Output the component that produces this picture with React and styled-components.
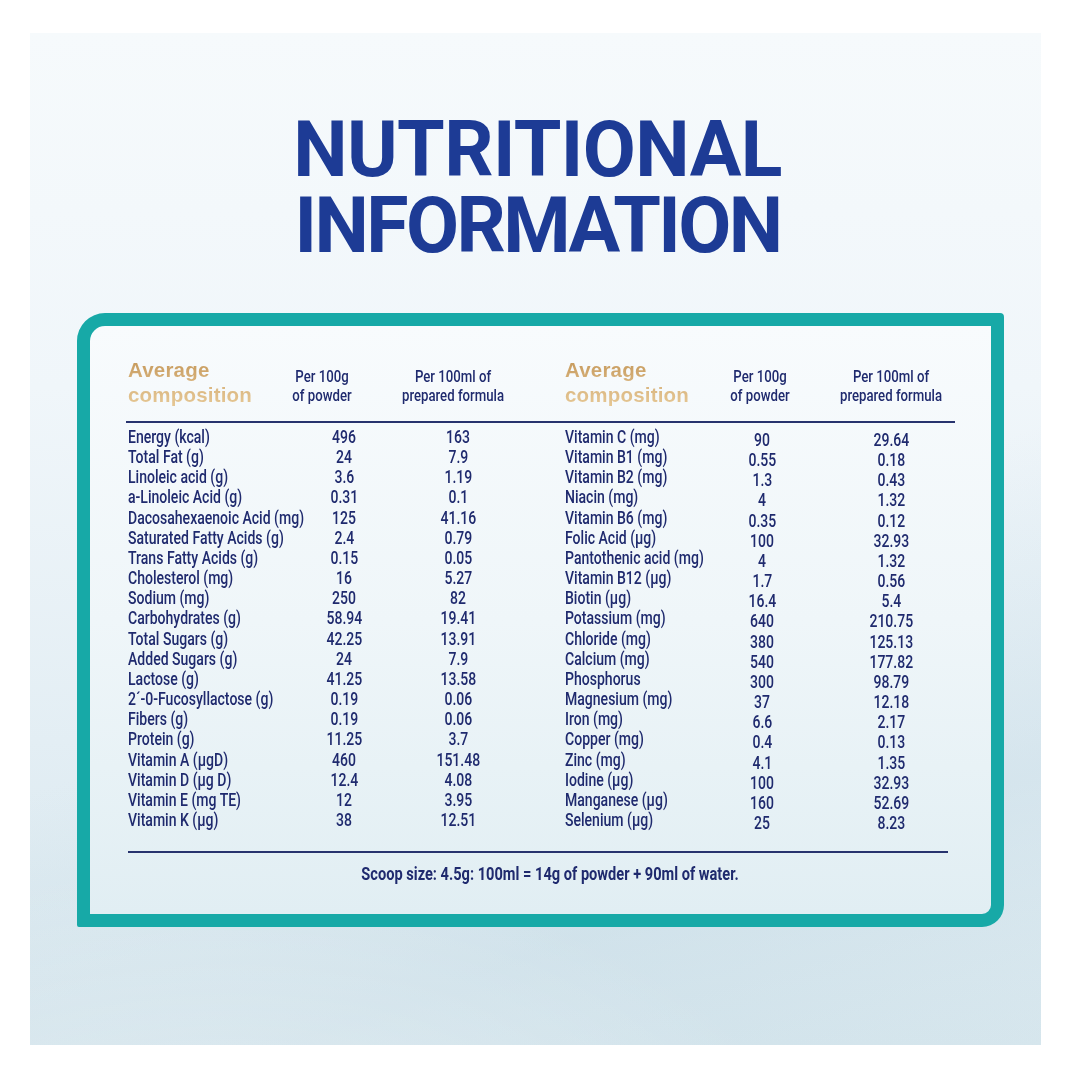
import React from "react";
import styled, { createGlobalStyle } from "styled-components";

const GlobalStyle = createGlobalStyle`
  html, body {
    margin: 0;
    padding: 0;
    background: #ffffff;
  }
  body {
    font-family: Roboto, "Liberation Sans", sans-serif;
  }
`;

const NAVY = "#1f2a6e";
const TEAL = "#17a9a7";

const Page = styled.div`
  width: 1080px;
  height: 1080px;
  padding-top: 33px;
  box-sizing: border-box;
`;

const Panel = styled.div`
  width: 1011px;
  height: 1012px;
  margin-left: 30px;
  box-sizing: border-box;
  padding-top: 79px;
  display: flex;
  flex-direction: column;
  background:
    radial-gradient(ellipse 900px 520px at 18% 118%, rgba(255, 255, 255, 0.45), rgba(255, 255, 255, 0) 70%),
    linear-gradient(160deg, rgba(255, 255, 255, 0) 55%, rgba(190, 214, 226, 0.35) 80%, rgba(255, 255, 255, 0) 100%),
    linear-gradient(180deg, #f6fafc 0%, #f0f6fa 35%, #e3eef4 70%, #d6e6ed 100%);
`;

const Title = styled.h1`
  margin: 0;
  font-family: Roboto, "Liberation Sans", sans-serif;
  font-weight: 700;
  font-size: 77px;
  line-height: 76px;
  color: #1d3b95;
  text-align: center;
  padding-left: 4px;
`;

const TitleLine = styled.span`
  display: block;
  letter-spacing: ${(p) => p.$spacing || "0px"};
`;

// the artwork uses a condensed DIN face; squeeze a regular face to match its widths
const Squeeze = styled.span`
  display: ${(p) => (p.$block ? "block" : "inline-block")};
  white-space: nowrap;
  transform: scaleX(${(p) => p.$k || 0.8});
  transform-origin: ${(p) => p.$origin || "left"} center;
`;

const Frame = styled.div`
  margin: 49px 0 0 47px;
  width: 927px;
  box-sizing: border-box;
  border: 13px solid ${TEAL};
  border-radius: 28px 4px 22px 2px;
  padding: 31px 0 0 38px;
  height: 614px;
  background: linear-gradient(180deg, #f8fbfd 0%, #eff6f9 50%, #e1eef3 100%);
  color: ${NAVY};
`;

const HeaderRow = styled.div`
  display: grid;
  grid-template-columns: 150px 88px 174px 25px 150px 90px 172px;
  align-items: center;
`;

const CompositionTitle = styled.div`
  font-family: "Liberation Sans", Arial, sans-serif;
  font-weight: 700;
  font-size: 20.5px;
  line-height: 25px;
  letter-spacing: 0.2px;
  background: linear-gradient(180deg, #c39556 0%, #d9b57f 55%, #e6c895 100%);
  -webkit-background-clip: text;
  background-clip: text;
  color: transparent;
  grid-column: ${(p) => p.$col};
`;

const ColHead = styled.div`
  font-size: 16.5px;
  font-weight: 500;
  line-height: 19px;
  text-align: center;
  padding-top: 8px;
  grid-column: ${(p) => p.$col};
`;

const Rule = styled.div`
  height: ${(p) => p.$thick || 2}px;
  width: ${(p) => p.$width}px;
  margin-left: ${(p) => p.$left || 0}px;
  margin-top: ${(p) => p.$top}px;
  background: #27336e;
`;

const Body = styled.div`
  display: flex;
  margin-top: 4px;
`;

const Half = styled.div`
  display: grid;
  grid-template-columns: ${(p) => p.$cols};
  margin-right: ${(p) => p.$gap || 0}px;
`;

const Label = styled.div`
  font-size: 18px;
  font-weight: 500;
  line-height: 20.15px;
  white-space: nowrap;
`;

const Value = styled.div`
  font-size: 17.5px;
  font-weight: 500;
  line-height: 20.15px;
  text-align: center;
  position: relative;
  top: ${(p) => (p.$shift ? 3 : 0)}px;
`;

const Note = styled.div`
  font-weight: 700;
  font-size: 17.5px;
  text-align: center;
  width: 844px;
  margin-top: 11px;
`;

const leftRows = [
  ["Energy (kcal)", "496", "163"],
  ["Total Fat (g)", "24", "7.9"],
  ["Linoleic acid (g)", "3.6", "1.19"],
  ["a-Linoleic Acid (g)", "0.31", "0.1"],
  ["Dacosahexaenoic Acid (mg)", "125", "41.16"],
  ["Saturated Fatty Acids (g)", "2.4", "0.79"],
  ["Trans Fatty Acids (g)", "0.15", "0.05"],
  ["Cholesterol (mg)", "16", "5.27"],
  ["Sodium (mg)", "250", "82"],
  ["Carbohydrates (g)", "58.94", "19.41"],
  ["Total Sugars (g)", "42.25", "13.91"],
  ["Added Sugars (g)", "24", "7.9"],
  ["Lactose (g)", "41.25", "13.58"],
  ["2\u00b4-0-Fucosyllactose (g)", "0.19", "0.06"],
  ["Fibers (g)", "0.19", "0.06"],
  ["Protein (g)", "11.25", "3.7"],
  ["Vitamin A (\u00b5gD)", "460", "151.48"],
  ["Vitamin D (\u00b5g D)", "12.4", "4.08"],
  ["Vitamin E (mg TE)", "12", "3.95"],
  ["Vitamin K (\u00b5g)", "38", "12.51"],
];

const rightRows = [
  ["Vitamin C (mg)", "90", "29.64"],
  ["Vitamin B1 (mg)", "0.55", "0.18"],
  ["Vitamin B2 (mg)", "1.3", "0.43"],
  ["Niacin (mg)", "4", "1.32"],
  ["Vitamin B6 (mg)", "0.35", "0.12"],
  ["Folic Acid (\u00b5g)", "100", "32.93"],
  ["Pantothenic acid (mg)", "4", "1.32"],
  ["Vitamin B12 (\u00b5g)", "1.7", "0.56"],
  ["Biotin (\u00b5g)", "16.4", "5.4"],
  ["Potassium (mg)", "640", "210.75"],
  ["Chloride (mg)", "380", "125.13"],
  ["Calcium (mg)", "540", "177.82"],
  ["Phosphorus", "300", "98.79"],
  ["Magnesium (mg)", "37", "12.18"],
  ["Iron (mg)", "6.6", "2.17"],
  ["Copper (mg)", "0.4", "0.13"],
  ["Zinc (mg)", "4.1", "1.35"],
  ["Iodine (\u00b5g)", "100", "32.93"],
  ["Manganese (\u00b5g)", "160", "52.69"],
  ["Selenium (\u00b5g)", "25", "8.23"],
];

const NutrientRows = ({ rows, shift }) =>
  rows.map(([name, powder, formula]) => (
    <React.Fragment key={name}>
      <Label>
        <Squeeze $k={0.78}>{name}</Squeeze>
      </Label>
      <Value $shift={shift}>
        <Squeeze $origin="center">{powder}</Squeeze>
      </Value>
      <Value $shift={shift}>
        <Squeeze $origin="center">{formula}</Squeeze>
      </Value>
    </React.Fragment>
  ));

const ColumnHeads = ({ start }) => (
  <>
    <CompositionTitle $col={start}>
      Average
      <br />
      composition
    </CompositionTitle>
    <ColHead $col={start + 1}>
      <Squeeze $block $origin="center">Per 100g</Squeeze>
      <Squeeze $block $origin="center">of powder</Squeeze>
    </ColHead>
    <ColHead $col={start + 2}>
      <Squeeze $block $origin="center">Per 100ml of</Squeeze>
      <Squeeze $block $origin="center">prepared formula</Squeeze>
    </ColHead>
  </>
);

export default function App() {
  return (
    <Page>
      <GlobalStyle />
      <Panel>
        <Title>
          <TitleLine $spacing="-0.6px">NUTRITIONAL</TitleLine>
          <TitleLine $spacing="-2.6px">INFORMATION</TitleLine>
        </Title>

        <Frame>
          <HeaderRow>
            <ColumnHeads start={1} />
            <ColumnHeads start={5} />
          </HeaderRow>

          <Rule $width={829} $left={-2} $top={14} />

          <Body>
            <Half $cols="176px 80px 148px" $gap={33}>
              <NutrientRows rows={leftRows} />
            </Half>
            <Half $cols="157px 80px 178px">
              <NutrientRows rows={rightRows} shift />
            </Half>
          </Body>

          <Rule $width={820} $top={21} $thick={1.5} />
          <Note>
            <Squeeze $block $origin="center" $k={0.835}>
              Scoop size: 4.5g: 100ml = 14g of powder + 90ml of water.
            </Squeeze>
          </Note>
        </Frame>
      </Panel>
    </Page>
  );
}
